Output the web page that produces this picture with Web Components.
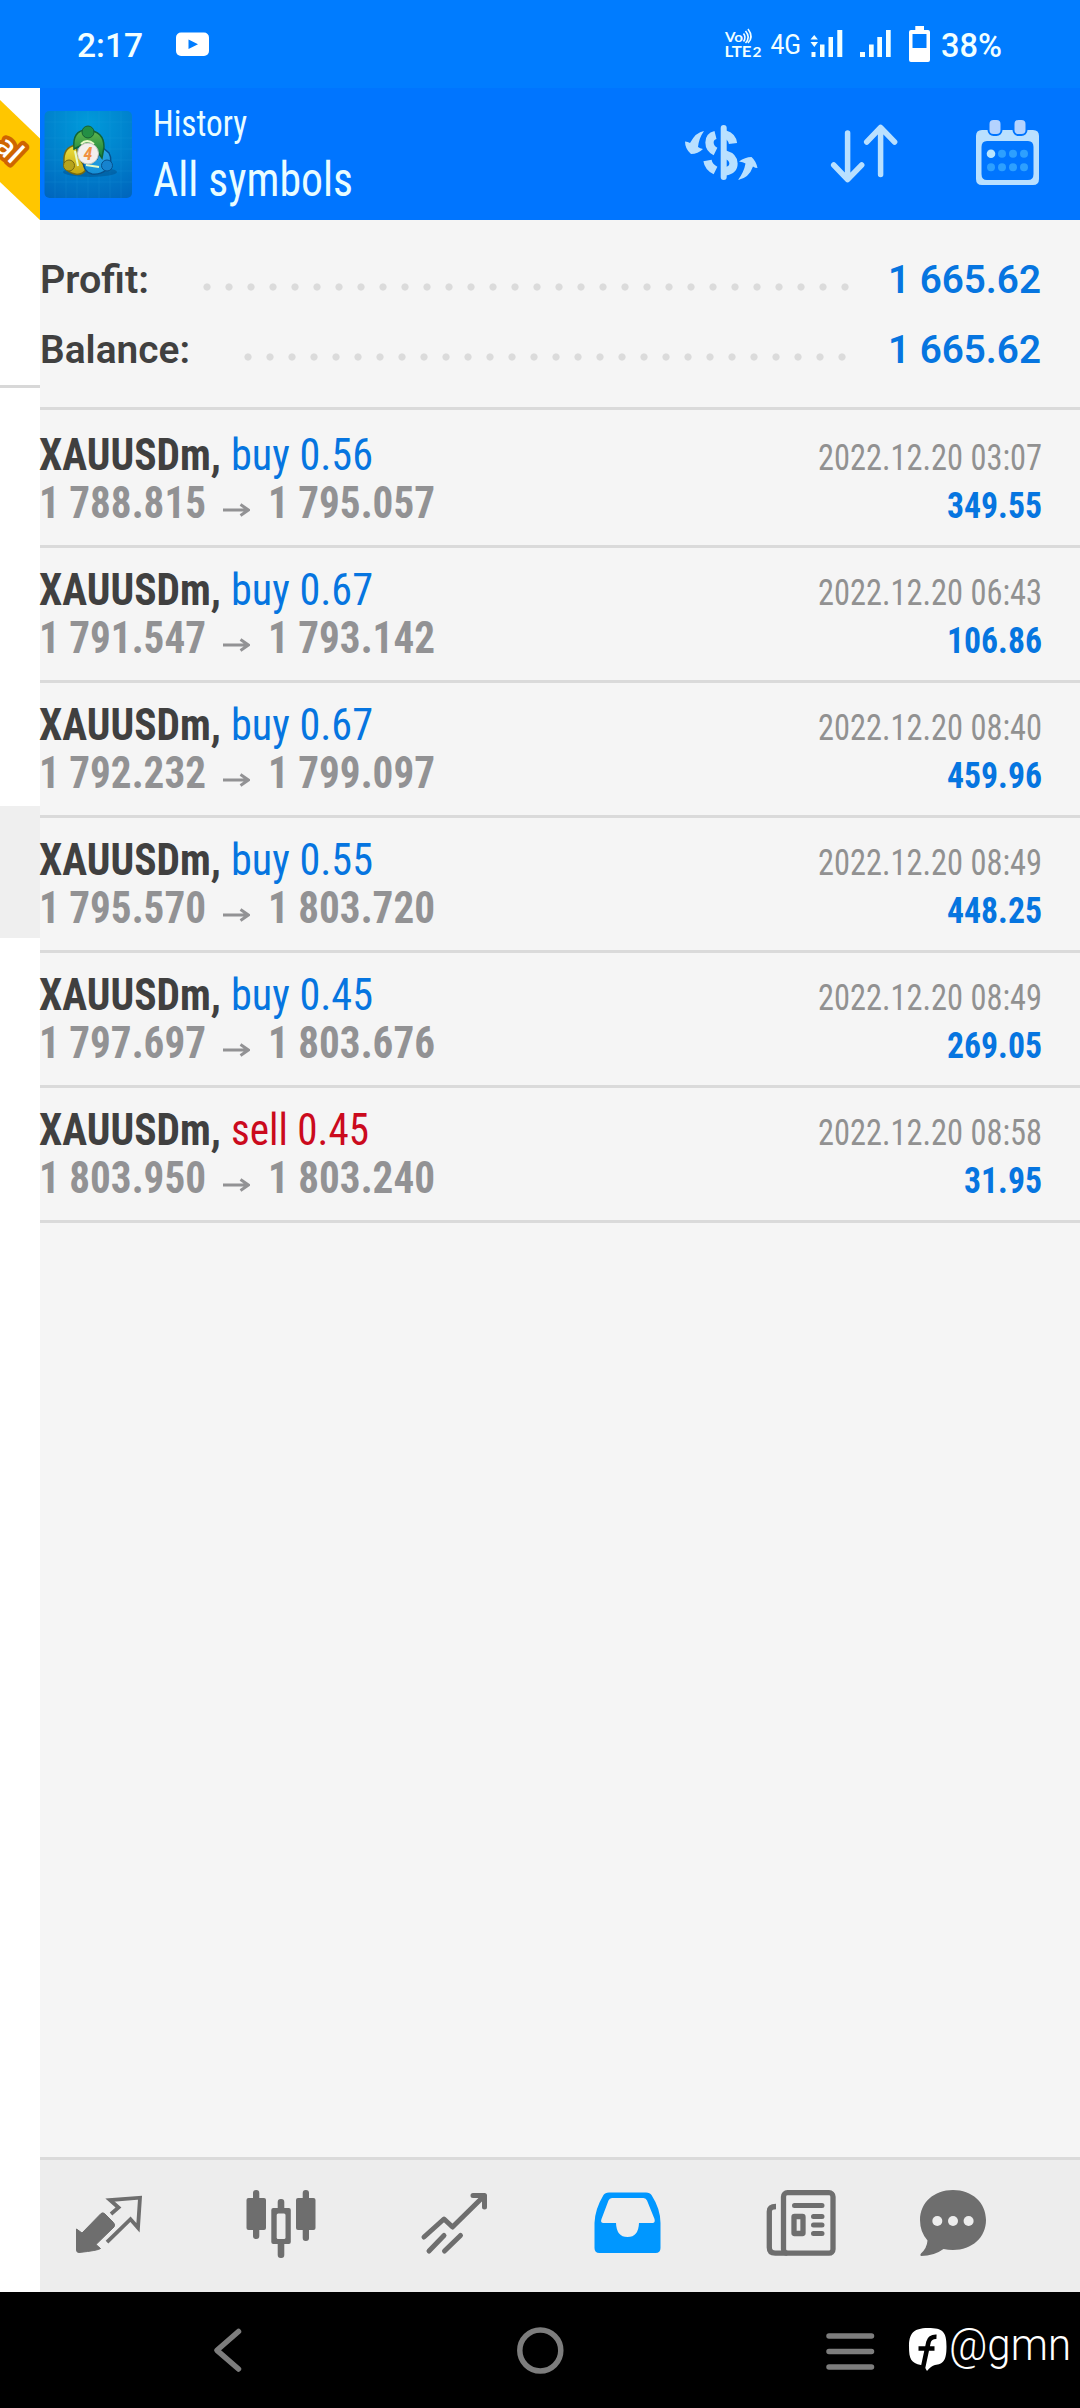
<!DOCTYPE html>
<html lang="en">
<head>
<meta charset="utf-8">
<title>History</title>
<style>
html,body{margin:0;padding:0}
body{width:1080px;height:2408px;overflow:hidden;background:#f5f5f5;font-family:"Roboto Condensed",Roboto,"Liberation Sans",sans-serif}
</style>
</head>
<body>
<history-app></history-app>
<script>
const define = (name, html, init) => customElements.define(name, class extends HTMLElement {
  connectedCallback() {
    if (this.shadowRoot) return;
    const root = this.attachShadow({ mode: 'open' });
    root.innerHTML = typeof html === 'function' ? html(this) : html;
    if (init) init(this, root);
  }
});

/* One line of text, condensed horizontally to the width given in "w". */
define('fit-text', `<style>
:host{display:inline-block;white-space:nowrap;line-height:1;flex:none}
span{display:inline-block;transform-origin:0 50%;line-height:1}
</style><span><slot></slot></span>`, (el, root) => {
  const span = root.querySelector('span');
  const w = +el.getAttribute('w');
  const natural = span.getBoundingClientRect().width;
  el.style.width = w + 'px';
  if (natural) span.style.transform = `scaleX(${w / natural})`;
});

define('status-bar', `<style>
:host{display:flex;height:88px;background:#007cff;color:#f2ffff;font-family:Roboto,sans-serif;box-sizing:border-box;padding-left:77px}
.time{font-size:33px;font-weight:460;padding-top:29px}
.pct{font-size:33px;font-weight:460;padding-top:29px;margin-left:7px}
.yt{margin-left:33px}.net{margin-left:510px}
svg{display:block;flex:none}
</style>
<fit-text class="time" w="66">2:17</fit-text>
<svg class="yt" width="34" height="88" viewBox="176 0 34 88"><rect x="176" y="32.5" width="33" height="23.5" rx="5" fill="#fff"/><path d="M188.5 39.5v9.5l9.5-4.7z" fill="#007cff"/></svg>
<svg class="net" width="214" height="88" viewBox="720 0 214 88" fill="#f2ffff">
<text x="725" y="42" font-size="14" font-weight="700" font-family="Lato" textLength="18" lengthAdjust="spacingAndGlyphs">Vo</text>
<path d="M743.5 33.5q3 4 0 8M745.5 31q5.500 6.500 0 12M748 29q6 8 0 14" fill="none" stroke="#f2ffff" stroke-width="1.600"/>
<text x="724.500" y="57" font-size="15.500" font-weight="700" font-family="Lato" textLength="27" lengthAdjust="spacingAndGlyphs">LTE</text>
<text x="752.500" y="57" font-size="14" font-weight="700" font-family="Lato" textLength="9" lengthAdjust="spacingAndGlyphs">2</text>
<text x="770.500" y="53.500" font-size="28" font-family="Roboto" font-weight="450" textLength="30.500" lengthAdjust="spacingAndGlyphs">4G</text>
<path d="M811.5 52h4v5h-4zM820 44.500h4.500V57H820zM828.500 37h4.500v20h-4.500zM837.300 30h5v27h-5zM810.500 39.500l3.700-4.500 3.700 4.500zM810.500 42h7.500l-3.700 5z"/>
<path d="M860 52h5v5h-5zM869 44.500h4.700V57H869zM877.300 37h4.700v20h-4.700zM886 30h4.700v27H886z"/>
<path fill-rule="evenodd" fill="#fff" d="M915.300 26h8.700v4h4q2 0 2 2v28q0 2-2 2h-17q-2 0-2-2V32q0-2 2-2h4.300zM912.500 34v14h14V34z"/>
</svg>
<fit-text class="pct" w="61">38%</fit-text>`);

define('mt-logo', `<style>:host{display:block;width:88px;height:87px}svg{display:block}</style>
<svg width="88" height="87" viewBox="44 111 88 87">
<defs>
<radialGradient id="bg" cx=".5" cy=".15" r=".95"><stop offset="0" stop-color="#009bdb"/><stop offset=".55" stop-color="#0080cc"/><stop offset="1" stop-color="#0066bd"/></radialGradient>
<linearGradient id="g" x2="0" y2="1"><stop stop-color="#63b84f"/><stop offset="1" stop-color="#12803c"/></linearGradient>
<linearGradient id="y" x2="0" y2="1"><stop stop-color="#efe13e"/><stop offset="1" stop-color="#c2a612"/></linearGradient>
<linearGradient id="b" x2="0" y2="1"><stop stop-color="#2ea7e4"/><stop offset="1" stop-color="#1590d8"/></linearGradient>
</defs>
<rect x="44.500" y="111" width="87.500" height="87" rx="5" fill="url(#bg)"/>
<path d="M55 111v87M66 111v87M77 111v87M88 111v87M99 111v87M110 111v87M121 111v87M44.500 122H132M44.500 138H132M44.500 149H132M44.500 160H132M44.500 171H132M44.500 182H132" stroke="#2da5e0" stroke-opacity=".16"/>
<ellipse cx="90" cy="172" rx="27" ry="5" fill="#00457c" opacity=".4"/>
<path d="M76 145q-13 2-12 17 0 10 13 12.500 6 0 9-5l-8-14z" fill="url(#y)" stroke="#776b12" stroke-width="1.500"/>
<path d="M84 160q-2 11 8 14 8 1 14-4 8-8 3-17l-7-6-5 12z" fill="url(#b)" stroke="#07518d" stroke-width="1.500"/>
<path d="M74 149q-2-19 13-19 17 1 17 17l-2 11-10-14h-8z" fill="url(#g)" stroke="#116536" stroke-width="1.500"/>
<path d="M75 151l3 15M86 165l13 2M81 144q6-6 13 0" fill="none" stroke="#e7fbc7" stroke-width="2"/>
<circle cx="88" cy="132" r="6" fill="#238f45" stroke="#155f32"/>
<circle cx="69" cy="165.500" r="5.500" fill="#b5a31c" stroke="#756813"/>
<circle cx="107" cy="165.500" r="5.500" fill="#1683cf" stroke="#07518d"/>
<circle cx="88" cy="153.500" r="10.500" fill="#f3efee" stroke="#c8c8c0"/>
<text x="88" y="160" text-anchor="middle" font-size="18" font-weight="700" font-style="italic" font-family="Roboto" fill="#f09142">4</text>
</svg>`);

define('title-bar', `<style>
:host{display:flex;height:132px;background:#0075ff;color:#e9fdff;box-sizing:border-box;font-stretch:75%}
mt-logo{margin:23px 0 0 4px}
.titles{display:flex;flex-direction:column;padding:18px 0 0 21px;gap:14px;width:515px;font-weight:430}
.small{font-size:36px}.big{font-size:48px}
svg{display:block}
</style>
<mt-logo></mt-logo>
<div class="titles"><fit-text class="small" w="94">History</fit-text><fit-text class="big" w="200">All symbols</fit-text></div>
<svg width="380" height="131" viewBox="669 88 380 131" fill="none" stroke="#b9e0ff" stroke-linecap="round" stroke-linejoin="round">
<path d="M724.700 128v49" stroke-width="6"/>
<g stroke-width="8.300" stroke-linecap="butt">
<path d="M716.500 135Q710.500 136.500 710.500 142.500T716.500 151.500"/>
<path d="M708.500 160.500Q709.500 167 716.500 170.500"/>
<path d="M726 134.500Q733 136.500 734 143.500"/>
<path d="M726 154.500Q734.500 157 734.500 163.500T726 171.500"/>
</g>
<g fill="#b9e0ff" stroke="none"><path d="M705 131Q697 132 691 143Q689 141.500 686 141.500Q686 149 692 154Q699 154 704 149Q701 148.500 699 147Q700 138 705 131Z"/><path d="M739 180Q750 178 754 166.500Q756 168 758.500 168Q757 161 752.500 157Q746 157 740 161.500Q744 162 746.500 163.500Q745 172 739 180Z"/></g>
<g stroke-width="5.500"><path d="M848.600 133v46M834.700 165l13.900 14.500L862.700 165M881.600 174.500V128M867.700 142l13.900-14.500 14 14.500"/></g>
<path d="M983 130h51q6 0 6 6v43q0 6-6 6h-51q-6 0-6-6v-43q0-6 6-6zM988 141q-5.500 0-5.500 6v27q0 6 5.500 6h41q5.500 0 5.500-6v-27q0-6-5.500-6z" fill="#b9e0ff" stroke="none" fill-rule="evenodd"/>
<g fill="#b4d3ff" stroke="#0075ff" stroke-width="2"><rect x="989.500" y="119" width="13" height="16" rx="5"/><rect x="1014.500" y="119" width="13" height="16" rx="5"/></g>
<g fill="#2da0ff" stroke="none"><circle cx="992" cy="153.700" r="4.300" fill="#b9e6ff"/><circle cx="1003" cy="153.700" r="4"/><circle cx="1014" cy="153.700" r="4"/><circle cx="1025" cy="153.700" r="4"/><circle cx="992" cy="167.300" r="4"/><circle cx="1003" cy="167.300" r="4"/><circle cx="1014" cy="167.300" r="4"/><circle cx="1025" cy="167.300" r="4"/></g>
</svg>`);

define('summary-row', el => `<style>
:host{display:flex;height:39px;align-items:center;font-family:Roboto,sans-serif;font-size:39px;font-weight:650;color:#404040}
.dots{height:8px;width:${el.getAttribute('dots') * 22}px;margin-left:${el.getAttribute('gap')}px;margin-top:12px;background:radial-gradient(circle at 11px 4px,#dbdbdb 3.200px,transparent 4px) 0 0/22px 8px}
.v{margin-left:auto;color:#0675e0}
</style><fit-text w="${el.getAttribute('w')}">${el.getAttribute('label')}</fit-text><div class="dots"></div><fit-text class="v" w="153"><slot></slot></fit-text>`);

define('deal-row', el => {
  const a = n => el.getAttribute(n);
  const sell = a('side') === 'sell';
  return `<style>
:host{display:flex;flex-direction:column;gap:3px;padding:19px 38px 20px 0;border-bottom:3px solid #dadada;font-size:45px;font-stretch:75%}
.l{display:flex;height:45px;align-items:baseline}
.sym{font-weight:700;color:#404040;margin-left:-1px}
.side{margin-left:10px;font-weight:430;color:${sell ? '#cb0a1d' : '#0675e0'}}
.p{font-weight:700;color:#929294}
.p:first-child{margin-left:-1px}
.arrow{width:27px;height:14px;margin:0 18px 8px 17px;align-self:flex-end}
.date{font-size:37px;margin-left:auto;color:#919191}
.gain{font-size:36.500px;font-weight:700;margin-left:auto;color:#0675e0}
</style>
<div class="l"><fit-text class="sym" w="182">XAUUSDm,</fit-text><fit-text class="side" w="${sell ? 138 : 142}">${a('side')} ${a('lots')}</fit-text><fit-text class="date" w="224">2022.12.20 ${a('time')}</fit-text></div>
<div class="l"><fit-text class="p" w="167">${a('from')}</fit-text><svg class="arrow" viewBox="0 0 27 14"><path d="M0 7h25M17.500 1.500L25.500 7l-8 5.500" fill="none" stroke="#929294" stroke-width="2.900"/></svg><fit-text class="p" w="167">${a('to')}</fit-text><fit-text class="gain" w="${a('gain').length > 5 ? 95 : 78}">${a('gain')}</fit-text></div>`;
});

define('side-strip', `<style>
:host{display:flex;flex-direction:column;width:40px;background:#fff;flex:none}
svg{display:block}.line{height:3px;background:#d8d8d8}.sel{height:132px;margin-top:418px;background:#efefef}
</style>
<svg width="40" height="297" viewBox="0 88 40 297"><path d="M0 100L40 138.500V220L0 182z" fill="#ffc600"/>
<text transform="translate(12 165) rotate(43)" text-anchor="end" font-family="Open Sans" font-weight="600" font-size="29" fill="#fff" stroke="#cf6500" stroke-width="8" stroke-linejoin="round" paint-order="stroke">al</text></svg>
<div class="line"></div><div class="sel"></div>`);

define('tab-bar', `<style>
:host{display:flex;border-top:3px solid #dadada;background:#ededed;padding:24px 0 0 28px;box-sizing:border-box;height:135px;gap:93px}
svg{display:block;flex:none}svg:last-of-type{margin-left:-20px}
</style>
<svg width="80" height="80" viewBox="68 2184 80 80"><path d="M76.500 2229L82 2233 101 2213.500Q103 2212 105 2214L113.500 2222.500Q115.500 2225 114 2227L96 2244.500 100.500 2248.500Q98 2250.500 79 2252.500Q76.500 2252.500 76.500 2250z" fill="#6e6e6e" stroke="#6e6e6e" stroke-linejoin="round"/><path d="M111 2214l7.500-6.500-8.500-7.500 30-2.300-2 30-7.500-8.500-23.500 23" fill="none" stroke="#6e6e6e" stroke-width="3.800" stroke-linejoin="miter"/></svg>
<svg width="80" height="80" viewBox="241 2184 80 80" fill="#6e6e6e"><rect x="253" y="2190" width="6.300" height="49" rx="3"/><rect x="246.500" y="2198" width="19.500" height="32" rx="2"/><rect x="302.700" y="2190" width="6.300" height="51" rx="3"/><rect x="296" y="2198" width="19.500" height="32" rx="2"/><rect x="277.700" y="2199" width="6.600" height="59" rx="3"/><rect x="271.300" y="2208" width="19.500" height="36" rx="2"/><rect x="276.700" y="2213.500" width="8.800" height="25.500" rx="1.500" fill="#ededed"/></svg>
<svg width="80" height="80" viewBox="414 2184 80 80" fill="none" stroke="#6e6e6e" stroke-width="5" stroke-linecap="round" stroke-linejoin="round"><path d="M424 2237L444 2219 452.500 2227 484 2196M473 2195.500h11.500v11.500M429 2251l15-15.500M444.500 2251l16-15.500"/></svg>
<svg width="80" height="80" viewBox="587 2184 80 80"><path fill="#0097ff" fill-rule="evenodd" d="M609 2192.500h37q4 0 5.500 2.500Q660.500 2209 660.500 2223v25q0 5-5 5h-56q-5 0-5-5v-25Q595 2209 603.500 2195q1.500-2.500 5.500-2.500zM612 2198q-2.500 0-3.500 2.500L601.500 2219q-1.500 4 2 4h12.500q.5 14 11.500 14t11.500-14h13.500q3 0 2-4l-7.500-18.500q-1-2.500-3.500-2.500z"/></svg>
<svg width="80" height="80" viewBox="760 2184 80 80" fill="none" stroke="#6e6e6e" stroke-width="5.300"><rect x="783.500" y="2192.700" width="49.500" height="60.500" rx="4"/><path d="M776 2206.500q-6.700 0-6.700 5v36q0 5.700 6 5.700h12"/><g stroke-linecap="round" stroke-width="5"><path d="M794.500 2205.500h27.500M813.500 2216.500H822M813.500 2225H822M813.500 2233.500H822"/></g><rect x="794" y="2216.500" width="9" height="17" rx=".5"/></svg>
<svg width="80" height="80" viewBox="913 2184 80 80"><path d="M953 2190c19 0 33 12.500 33 30s-14 30-33 30q-5 0-9.500-1Q934 2256 921 2256q-1.500-1 0-2.500Q927 2248 927.500 2240.500Q920 2232 920 2220c0-17.500 14-30 33-30z" fill="#6e6e6e"/><g fill="#ededed"><circle cx="937.300" cy="2221" r="5"/><circle cx="953" cy="2221" r="5"/><circle cx="968.600" cy="2221" r="5"/></g></svg>`);

define('system-nav', `<style>
:host{display:flex;height:116px;background:#000;color:#fff;font-family:Roboto,sans-serif}
svg{display:block;flex:none}
.h{font-size:43.500px;font-weight:330;margin:32px 0 0}
.h+.h{margin-left:1px}
</style>
<svg width="949" height="116" viewBox="0 2292 949 116" fill="none" stroke="#7d7d7d" stroke-width="5.500" stroke-linecap="round" stroke-linejoin="round"><path d="M238.500 2331.500L217 2350.300 238.500 2369"/><circle cx="540.300" cy="2350.500" r="20.500"/><path d="M829 2336h42.500M829 2351.500h42.500M829 2367h42.500"/>
<path d="M928 2328c15 0 18.500 4 18.500 18.500S943 2364 935 2365Q931 2366 927 2371Q924 2365 921 2365C911 2363 909 2359 909 2346.500S913 2328 928 2328z" fill="#fff" stroke="none"/><path d="M936.500 2336.800Q930 2336.500 928.500 2342L922.500 2370M918.500 2348.500h16" stroke="#000" stroke-width="4.600" stroke-linecap="butt"/></svg>
<fit-text class="h" w="122">@gmn</fit-text>`);

define('history-app', `<style>
:host{display:flex;flex-direction:column;width:1080px;height:2408px}
.body{display:flex;height:2204px}
main{display:flex;flex-direction:column;width:1040px;background:#f5f5f5}
.sum{display:flex;flex-direction:column;gap:31px;padding:41px 39px 37px 0;border-bottom:3px solid #dadada}
.list{display:flex;flex-direction:column;padding-top:3px;flex:1}
</style>
<status-bar></status-bar>
<div class="body"><side-strip></side-strip><main>
<title-bar></title-bar>
<div class="sum"><summary-row label="Profit:" w="109" gap="47" dots="30">1 665.62</summary-row><summary-row label="Balance:" w="150" gap="47" dots="28">1 665.62</summary-row></div>
<div class="list">
<deal-row side="buy" lots="0.56" time="03:07" from="1 788.815" to="1 795.057" gain="349.55"></deal-row>
<deal-row side="buy" lots="0.67" time="06:43" from="1 791.547" to="1 793.142" gain="106.86"></deal-row>
<deal-row side="buy" lots="0.67" time="08:40" from="1 792.232" to="1 799.097" gain="459.96"></deal-row>
<deal-row side="buy" lots="0.55" time="08:49" from="1 795.570" to="1 803.720" gain="448.25"></deal-row>
<deal-row side="buy" lots="0.45" time="08:49" from="1 797.697" to="1 803.676" gain="269.05"></deal-row>
<deal-row side="sell" lots="0.45" time="08:58" from="1 803.950" to="1 803.240" gain="31.95"></deal-row>
</div>
<tab-bar></tab-bar>
</main></div>
<system-nav></system-nav>`);
</script>
</body>
</html>
